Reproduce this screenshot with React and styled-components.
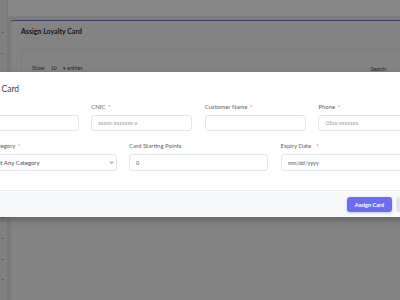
import React from "react";
import styled, { createGlobalStyle } from "styled-components";

const Global = createGlobalStyle`
  html, body { margin: 0; padding: 0; width: 400px; height: 300px; overflow: hidden; }
  body { font-family: Lato, "Open Sans", sans-serif; background: #e6e7e9; }
  * { box-sizing: border-box; }
`;

const Page = styled.div`
  position: relative;
  width: 400px;
  height: 300px;
  display: flex;
  overflow: hidden;
`;

const Sidebar = styled.nav`
  width: 8px;
  flex: none;
  background: #f1f1f2;
  border-right: 1px solid #e2e2e4;
  display: flex;
  flex-direction: column;
  padding-top: 28px;
  gap: 12.6px;
`;

const SideItem = styled.span`
  display: block;
  width: 3px;
  height: 8px;
  margin-left: 1px;
  font-size: 6px;
  line-height: 8px;
  color: #555;
  overflow: hidden;
`;

const Main = styled.div`
  flex: 1;
  display: flex;
  flex-direction: column;
`;

const Navbar = styled.header`
  height: 17px;
  background: #ffffff;
  border-bottom: 1px solid #eceef0;
  flex: none;
`;

const Content = styled.div`
  padding: 3px 0 0 2px;
  flex: 1;
`;

const Card = styled.section`
  background: #f8f8f9;
  border-top: 1px solid #7475c8;
  border-left: 1px solid #e4e4e8;
  border-top-left-radius: 4px;
  height: 100%;
`;

const CardTitle = styled.h2`
  margin: 0;
  padding: 6px 0 0 10px;
  height: 28px;
  font-size: 7px;
  font-weight: 700;
  color: #2c2c30;
  line-height: 9px;
`;

const Panel = styled.div`
  margin-left: 10px;
  border-top: 1px solid #ececef;
  border-left: 1px solid #ececef;
  padding: 14px 13px 0 10px;
  display: flex;
  justify-content: space-between;
  font-size: 5.2px;
  color: #444;
`;

const Entries = styled.div`
  display: flex;
  gap: 6px;
  align-items: center;
`;

const Search = styled.div`
  margin-top: 2px;
`;

const Overlay = styled.div`
  position: absolute;
  inset: 0;
  background: rgba(0, 0, 0, 0.47);
`;

const Modal = styled.div`
  position: absolute;
  top: 72px;
  left: -40px;
  width: 477px;
  background: #fff;
  box-shadow: 0 3px 6px rgba(0, 0, 0, 0.25);
  display: flex;
  flex-direction: column;
`;

const ModalHeader = styled.div`
  padding: 12px 14px 9px 15px;
`;

const ModalTitle = styled.h3`
  margin: 0;
  font-size: 8.5px;
  line-height: 10px;
  font-weight: 400;
  color: #3d3d42;
`;

const ModalBody = styled.div`
  padding: 0 17.5px 19px;
  display: flex;
  flex-direction: column;
  gap: 11px;
`;

const FieldGrid = styled.div`
  display: grid;
  grid-template-columns: repeat(${(p) => p.$cols}, 1fr);
  column-gap: 12.5px;
`;

const Field = styled.div`
  display: flex;
  flex-direction: column;
`;

const Label = styled.label`
  font-size: 6px;
  line-height: 8px;
  color: #5e5e64;
  margin-bottom: 4px;
  white-space: nowrap;
`;

const Req = styled.span`
  color: #e0555a;
  margin-left: ${(p) => p.$gap || 1}px;
`;

const Input = styled.input`
  display: block;
  height: ${(p) => p.$h || 16}px;
  border: 1px solid #e3e6ea;
  border-radius: 3px;
  padding: 0 6px;
  font-family: inherit;
  font-size: 5.5px;
  color: #555;
  background: #fff;
  outline: none;
  width: 100%;
  &::placeholder { color: ${(p) => p.$ph || "#9c9ca2"}; }
`;

const SelectWrap = styled.div`
  position: relative;
`;

const Select = styled.select`
  display: block;
  appearance: none;
  -webkit-appearance: none;
  width: 100%;
  height: 17px;
  line-height: 15px;
  border: 1px solid #e3e6ea;
  border-radius: 3px;
  padding: 0 6px 0 8px;
  font-family: inherit;
  font-size: 6px;
  color: #4c4c52;
  background: #fff;
  outline: none;
`;

const Chevron = styled.svg`
  position: absolute;
  right: 3px;
  top: 6px;
  width: 5px;
  height: 5px;
  pointer-events: none;
`;

const ModalFooter = styled.div`
  border-top: 1px solid #e8eaed;
  background: #f8f9fa;
  padding: 6px 13px 5px 5px;
  display: flex;
  justify-content: flex-end;
  gap: 4px;
`;

const Button = styled.button`
  height: 15px;
  border: none;
  border-radius: 3px;
  padding: 0 ${(p) => p.$px || 8}px;
  font-family: inherit;
  font-size: 5.6px;
  font-weight: 700;
  color: ${(p) => (p.$variant === "primary" ? "#fff" : "#555")};
  background: ${(p) => (p.$variant === "primary" ? "#6a6df0" : "#e3e4e8")};
  box-shadow: ${(p) =>
    p.$variant === "primary" ? "0 1px 3px rgba(106,109,240,0.35)" : "none"};
`;

export default function App() {
  const items = Array.from({ length: 13 });
  return (
    <>
      <Global />
      <Page>
        <Sidebar>
          {items.map((_, i) => (
            <SideItem key={i}>–</SideItem>
          ))}
        </Sidebar>
        <Main>
          <Navbar />
          <Content>
            <Card>
              <CardTitle>Assign Loyalty Card</CardTitle>
              <Panel>
                <Entries>
                  <span>Show</span>
                  <span>10</span>
                  <span>▾ entries</span>
                </Entries>
                <Search>Search:</Search>
              </Panel>
            </Card>
          </Content>
        </Main>
        <Overlay />
        <Modal>
          <ModalHeader>
            <ModalTitle>Assign Card</ModalTitle>
          </ModalHeader>
          <ModalBody>
            <FieldGrid $cols={4}>
              <Field>
                <Label>
                  Card<Req> *</Req>
                </Label>
                <Input />
              </Field>
              <Field>
                <Label>
                  CNIC<Req> *</Req>
                </Label>
                <Input placeholder="xxxxx-xxxxxxx-x" />
              </Field>
              <Field>
                <Label>
                  Customer Name<Req> *</Req>
                </Label>
                <Input />
              </Field>
              <Field>
                <Label>
                  Phone<Req> *</Req>
                </Label>
                <Input placeholder="03xx-xxxxxxx" />
              </Field>
            </FieldGrid>
            <FieldGrid $cols={3}>
              <Field>
                <Label>
                  Card Category<Req> *</Req>
                </Label>
                <SelectWrap>
                  <Select defaultValue="">
                    <option value="">Select Any Category</option>
                  </Select>
                  <Chevron viewBox="0 0 10 10">
                    <path d="M2 3.5 L5 6.5 L8 3.5" fill="none" stroke="#444" strokeWidth="1.6" />
                  </Chevron>
                </SelectWrap>
              </Field>
              <Field>
                <Label>Card Starting Points</Label>
                <Input $h={17} defaultValue="0" />
              </Field>
              <Field>
                <Label>
                  Expiry Date<Req $gap={5}>*</Req>
                </Label>
                <Input $h={17} $ph="#555" placeholder="mm/dd/yyyy" />
              </Field>
            </FieldGrid>
          </ModalBody>
          <ModalFooter>
            <Button $variant="primary">Assign Card</Button>
            <Button $px={7}>Close</Button>
          </ModalFooter>
        </Modal>
      </Page>
    </>
  );
}
